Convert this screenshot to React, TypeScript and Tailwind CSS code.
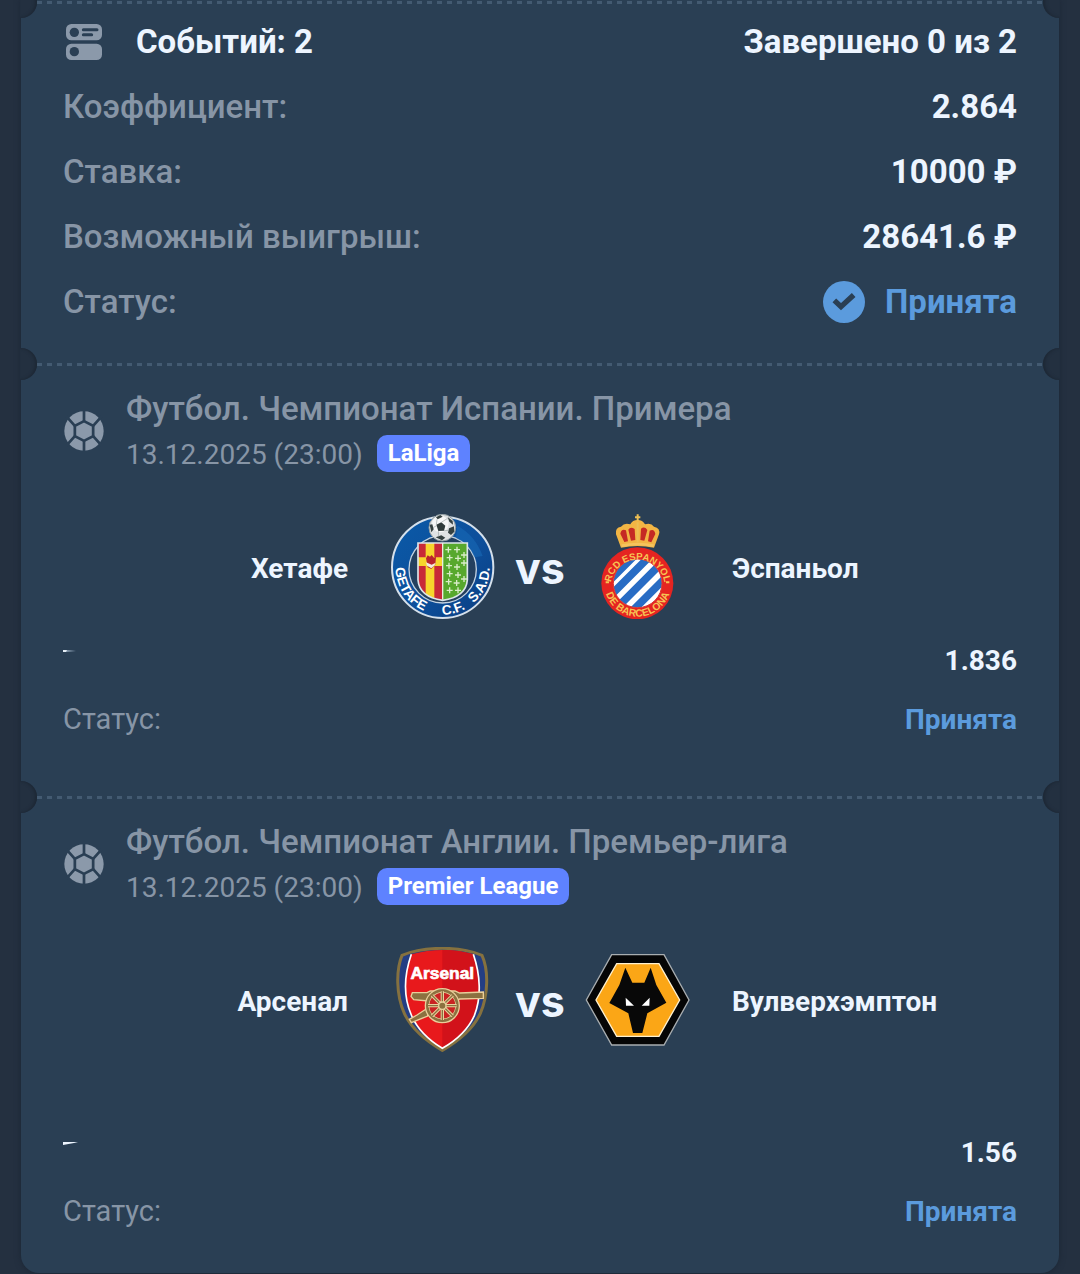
import type { ReactNode } from "react";

function EventsIcon() {
  return (
    <svg viewBox="198 75 108 108" className="mx-[3px] size-9 shrink-0" aria-hidden="true">
      <rect x="198" y="75" width="108" height="49" rx="16" fill="#8b99aa" />
      <rect x="198" y="134" width="108" height="49" rx="16" fill="#8b99aa" />
      <g fill="#2a3f54">
        <circle cx="223" cy="100" r="14" />
        <circle cx="223" cy="158" r="14" />
      </g>
      <path d="M250 92H291M250 107H275" stroke="#2a3f54" strokeWidth="9" strokeLinecap="round" />
    </svg>
  );
}

function FootballIcon() {
  return (
    <svg viewBox="-59 -59 118 118" className="size-10 shrink-0" aria-hidden="true">
      <circle r="58" fill="#8b99aa" />
      <g fill="none" stroke="#2a3f54" strokeWidth="8">
        <path d="M0 -29L27 -15V15L0 29L-27 15V-15Z" />
        <path d="M0 -29V-60M0 29V60M27 -15L52 -43M27 15L52 43M-27 -15L-52 -43M-27 15L-52 43" />
      </g>
    </svg>
  );
}

function AcceptedIcon() {
  return (
    <svg viewBox="0 0 126 126" className="size-[42px]" aria-hidden="true">
      <circle cx="63" cy="63" r="63" fill="#5b9bdd" />
      <path d="M34 58L54 77L92 42" fill="none" stroke="#2a3f54" strokeWidth="16" />
    </svg>
  );
}

function Getafe() {
  const cross = "M-9 0H9M0 -9V9";
  const crosses = [
    [205, 134], [231, 134], [252, 150], [209, 158], [234, 160], [207, 182],
    [231, 186], [252, 174], [209, 206], [234, 210], [206, 230], [230, 234],
    [252, 222], [209, 256], [234, 256],
  ];
  return (
    <svg viewBox="30 27 315 315" className="size-[105px]" role="img" aria-label="Хетафе">
      <defs>
        <linearGradient id="getafeBlue" x1="0" y1="0" x2="1" y2="1">
          <stop offset="0" stopColor="#0a5aa8" />
          <stop offset="0.55" stopColor="#0d4f9b" />
          <stop offset="1" stopColor="#0a3d80" />
        </linearGradient>
        <path id="getafeArc" d="M47 188A141 141 0 0 0 329 188" />
        <clipPath id="getafeShield">
          <path d="M114 114H262V225Q258 276 188 286Q118 276 114 225Z" />
        </clipPath>
      </defs>
      <circle cx="188" cy="187" r="152" fill="url(#getafeBlue)" stroke="#d5e0eb" strokeWidth="6" />
      <circle cx="188" cy="193" r="101" fill="#24405f" stroke="#c4d3e2" strokeWidth="4" />
      <path d="M232 62Q286 91 308 153L283 157Q268 116 228 99Z" fill="#1769b5" opacity=".6" />
      <g clipPath="url(#getafeShield)">
        <rect x="112" y="112" width="76" height="176" fill="#c82938" />
        <path d="M150 112V288M112 170H188" stroke="#f7d52c" strokeWidth="26" />
        <rect x="188" y="112" width="76" height="176" fill="#57a82d" />
        {crosses.map(([x, y]) => (
          <path key={`${x}-${y}`} d={cross} transform={`translate(${x} ${y})`} stroke="#d8ecc7" strokeWidth="4" />
        ))}
      </g>
      <path d="M114 114H262V225Q258 276 188 286Q118 276 114 225Z" fill="none" stroke="#dce5ea" strokeWidth="5" />
      <path d="M188 114V284" stroke="#e9eee0" strokeWidth="4" />
      <path d="M138 160L143 151L150 155L155 150L162 158L168 155L166 178L154 192L143 187Z" fill="#b9232e" />
      <path d="M138 172L155 179L167 173L164 181L154 190L141 182Z" fill="#f2eadf" />
      <circle cx="187" cy="68" r="40" fill="#dfe2e3" stroke="#8e9b9f" strokeWidth="3" />
      <circle cx="181" cy="57" r="25" fill="#f6f7f7" />
      <path d="M169 59L184 52L196 62L192 77L175 78Z" fill="#303b3b" />
      <path d="M168 37L181 30L188 35L173 43ZM203 36L218 48L219 59L208 50ZM149 59L157 58L161 73L154 82ZM167 97L184 91L196 98L186 106ZM207 70L222 64L223 80L213 90L204 83Z" fill="#344040" />
      <path d="M171 43L169 59M184 52L203 40M192 77L206 76M175 78L176 94M159 68L170 62" stroke="#9ca5a5" strokeWidth="2" />
      <g fill="#fff" fontFamily="Liberation Sans" fontWeight="700" fontSize="41">
        <text>
          <textPath href="#getafeArc">GETAFE</textPath>
        </text>
        <text textAnchor="middle">
          <textPath href="#getafeArc" startOffset="58%">C.F.</textPath>
        </text>
        <text textAnchor="end">
          <textPath href="#getafeArc" startOffset="100%">S.A.D.</textPath>
        </text>
      </g>
    </svg>
  );
}

function Espanyol() {
  return (
    <svg viewBox="15 27 315 315" className="size-[105px]" role="img" aria-label="Эспаньол">
      <defs>
        <clipPath id="espanyolInner">
          <circle cx="173" cy="235" r="73" />
        </clipPath>
        <path id="espanyolTop" d="M92 245A81 81 0 1 1 254 245" />
        <path id="espanyolBottom" d="M73 235A100 100 0 0 0 273 235" />
      </defs>
      <path d="M123 128L108 88Q105 67 123 65Q133 52 151 58Q157 45 173 45Q188 45 195 58Q213 52 222 65Q242 69 237 88L222 128Q173 118 123 128Z" fill="#f2b544" />
      <path d="M133 111L121 86Q124 70 138 76L144 109ZM153 107L145 74Q151 64 164 72L166 105ZM181 105L183 71Q194 63 202 75L193 107ZM204 109L209 77Q223 70 226 87L214 112Z" fill="#c52a24" />
      <path d="M173 28V48M165 37H181M173 52V112" stroke="#edbf53" strokeWidth="6" />
      <path d="M125 122Q173 112 221 122" fill="none" stroke="#f5c45d" strokeWidth="8" />
      <circle cx="172" cy="235" r="108" fill="#e52421" />
      <g clipPath="url(#espanyolInner)">
        <rect x="95" y="157" width="156" height="156" fill="#fff" />
        <path d="M70 245L195 120M85 278L220 143M113 306L248 171M144 331L279 196" stroke="#286cc4" strokeWidth="23" />
      </g>
      <circle cx="173" cy="235" r="73" fill="none" stroke="#d83a32" strokeWidth="3" />
      <g fill="#f6c354" fontFamily="Liberation Sans" fontWeight="700">
        <text textAnchor="middle" fontSize="29">
          <textPath href="#espanyolTop" startOffset="50%">RCD ESPANYOL</textPath>
        </text>
        <text textAnchor="middle" fontSize="31">
          <textPath href="#espanyolBottom" startOffset="50%">DE BARCELONA</textPath>
        </text>
      </g>
      <path d="M77 232H87M258 232H268" stroke="#f6c354" strokeWidth="6" />
    </svg>
  );
}

function Arsenal() {
  const shield = "M187 40Q255 40 306 61C326 105 325 180 301 235Q273 296 187 346Q101 296 73 235C48 180 48 105 66 61Q117 40 187 40Z";
  return (
    <svg viewBox="30 36 315 315" className="size-[105px]" role="img" aria-label="Арсенал">
      <path d={shield} fill="#243e83" stroke="#85713f" strokeWidth="9" />
      <path d="M94 58Q142 45 187 45Q236 45 280 58C301 119 305 187 283 242Q257 300 187 340Q118 298 94 240C70 185 73 119 94 58Z" fill="#e8191c" />
      <path d="M187 45Q236 45 280 58C301 119 305 187 283 242Q257 300 187 340Z" fill="#d2121a" />
      <path d="M94 58C73 119 70 185 94 240Q118 298 187 340Q257 300 283 242C305 187 301 119 280 58" fill="none" stroke="#fff" strokeWidth="5" />
      <path d="M97 173H141L151 168H225L239 174L310 171V190L239 192L226 201L145 198L101 194L93 184Z" fill="#8b7140" stroke="#e9cf9b" strokeWidth="4" />
      <path d="M143 219L111 240L88 253L94 263L143 243Z" fill="#8b7140" stroke="#e9cf9b" strokeWidth="4" />
      <circle cx="187" cy="212" r="46" fill="#c92322" stroke="#e9cf9b" strokeWidth="14" />
      <circle cx="187" cy="212" r="45" fill="none" stroke="#8b7140" strokeWidth="8" />
      <path d="M187 169V255M144 212H230M156 181L218 243M156 243L218 181" stroke="#ead39e" strokeWidth="10" />
      <path d="M187 169V255M144 212H230M156 181L218 243M156 243L218 181" stroke="#8b7140" strokeWidth="4" />
      <circle cx="187" cy="212" r="11" fill="#8b7140" stroke="#ead39e" strokeWidth="4" />
      <text x="187" y="131" textAnchor="middle" fill="#fff" stroke="#fff" strokeWidth="2" fontFamily="Liberation Sans" fontWeight="700" fontSize="52">Arsenal</text>
    </svg>
  );
}

function Wolves() {
  return (
    <svg viewBox="255 36 315 315" className="size-[105px]" role="img" aria-label="Вулверхэмптон">
      <path d="M335 59H492L567 195L492 330H335L259 195Z" fill="#050505" stroke="#a8adb0" strokeWidth="4" />
      <path d="M350 86H477L539 195L477 304H350L288 195Z" fill="#fba616" stroke="#fff1cf" strokeWidth="4" />
      <path d="M376 98L397 143H433L452 98L469 150L499 203L442 235L427 294H399L385 235L328 204L358 150Z" fill="#080808" />
      <path d="M377 188L402 212H378ZM449 188L425 212H448Z" fill="#fff" />
    </svg>
  );
}

function Perforation() {
  return (
    <div className="relative h-[3px]" aria-hidden="true">
      <div className="mx-4 h-full bg-[repeating-linear-gradient(90deg,#435a71_0_5px,transparent_5px_10px)]" />
      <div className="absolute -top-[15px] -left-px h-8 w-[17px] rounded-r-full bg-[#233040] shadow-[inset_-2px_0_3px_#1d2835]" />
      <div className="absolute -top-[15px] -right-px h-8 w-[17px] rounded-l-full bg-[#233040] shadow-[inset_2px_0_3px_#1d2835]" />
    </div>
  );
}

function SummaryRow({ label, children }: { label: string; children: ReactNode }) {
  return (
    <div className="flex h-[65px] items-center justify-between">
      <dt className="font-medium text-[#8795a6]">{label}</dt>
      <dd className="font-bold text-[#edf5ff]">{children}</dd>
    </div>
  );
}

type Match = {
  title: string;
  date: string;
  league: string;
  home: string;
  away: string;
  homeCrest: ReactNode;
  awayCrest: ReactNode;
  odds: string;
  mark: ReactNode;
  className: string;
  oddsClassName: string;
};

function MatchSection({ match }: { match: Match }) {
  return (
    <section>
      <Perforation />
      <div className={`px-[42px] pt-[19px] ${match.className}`}>
        <header className="flex items-center gap-[21px]">
          <div className="flex w-[42px] shrink-0 justify-center pt-0.5">
            <FootballIcon />
          </div>
          <div className="text-[#8795a6]">
            <h2 className="text-[33px] leading-[48px] font-medium">{match.title}</h2>
            <div className="flex h-[42px] items-center gap-3.5 text-[28px]">
              <time className="pt-0.5">{match.date}</time>
              <span className="mb-0.5 flex h-[37px] items-center rounded-[10px] bg-[#5e82ff] px-[11px] text-2xl font-bold text-white">
                {match.league}
              </span>
            </div>
          </div>
        </header>
        <div className="mt-[39px] flex items-center text-[28px] font-bold text-[#edf5ff]">
          <div className="flex-1 pt-1 pr-[42px] text-right">{match.home}</div>
          {match.homeCrest}
          <div className="w-[90px] pt-1 text-center font-['Inter',sans-serif] text-[43px] leading-none">vs</div>
          {match.awayCrest}
          <div className="flex-1 pt-1 pl-[42px]">{match.away}</div>
        </div>
        <dl className={`text-[28px] ${match.oddsClassName}`}>
          <div className="flex h-[59px] items-center justify-between">
            <dt className="self-start pt-[18px]">{match.mark}</dt>
            <dd className="font-bold text-[#edf5ff]">{match.odds}</dd>
          </div>
          <div className="flex h-[59px] items-center justify-between">
            <dt className="text-[29px] text-[#8795a6]">Статус:</dt>
            <dd className="font-bold text-[#5b9bdd]">Принята</dd>
          </div>
        </dl>
      </div>
    </section>
  );
}

const matches: Match[] = [
  {
    title: "Футбол. Чемпионат Испании. Примера",
    date: "13.12.2025 (23:00)",
    league: "LaLiga",
    home: "Хетафе",
    away: "Эспаньол",
    homeCrest: <Getafe />,
    awayCrest: <Espanyol />,
    odds: "1.836",
    mark: (
      <svg viewBox="0 0 16 4" className="h-1 w-4" aria-hidden="true">
        <path d="M0 1L5 1L13 2L4 3L0 3Z" fill="#7f93a7" />
        <path d="M0 1H4L3 3H0Z" fill="#e5edf5" />
      </svg>
    ),
    className: "pb-[47px]",
    oddsClassName: "mt-3",
  },
  {
    title: "Футбол. Чемпионат Англии. Премьер-лига",
    date: "13.12.2025 (23:00)",
    league: "Premier League",
    home: "Арсенал",
    away: "Вулверхэмптон",
    homeCrest: <Arsenal />,
    awayCrest: <Wolves />,
    odds: "1.56",
    mark: (
      <svg viewBox="0 0 16 4" className="h-1 w-4" aria-hidden="true">
        <path d="M0 1H11L15 1L11 2L0 4Z" fill="#edf5ff" />
      </svg>
    ),
    className: "pb-8",
    oddsClassName: "mt-[71px]",
  },
];

export default function App() {
  return (
    <main className="min-h-screen bg-[#243040] px-[21px] pb-px font-['Roboto',sans-serif]">
      <article className="rounded-b-[18px] bg-[#2a3f54] pt-px shadow-[0_0_6px_#1b2634]">
        <section>
          <Perforation />
          <div className="px-[42px] pt-[5px] pb-[29px] text-[33px]">
            <div className="flex h-[65px] items-center justify-between font-bold text-[#edf5ff]">
              <h1 className="flex items-center gap-[31px]">
                <EventsIcon />
                Событий: 2
              </h1>
              <p>Завершено 0 из 2</p>
            </div>
            <dl>
              <SummaryRow label="Коэффициент:">2.864</SummaryRow>
              <SummaryRow label="Ставка:">10000 ₽</SummaryRow>
              <SummaryRow label="Возможный выигрыш:">28641.6 ₽</SummaryRow>
              <SummaryRow label="Статус:">
                <span className="flex items-center gap-5 text-[#5b9bdd]">
                  <AcceptedIcon />
                  Принята
                </span>
              </SummaryRow>
            </dl>
          </div>
        </section>
        {matches.map((match) => (
          <MatchSection key={match.title} match={match} />
        ))}
      </article>
    </main>
  );
}
